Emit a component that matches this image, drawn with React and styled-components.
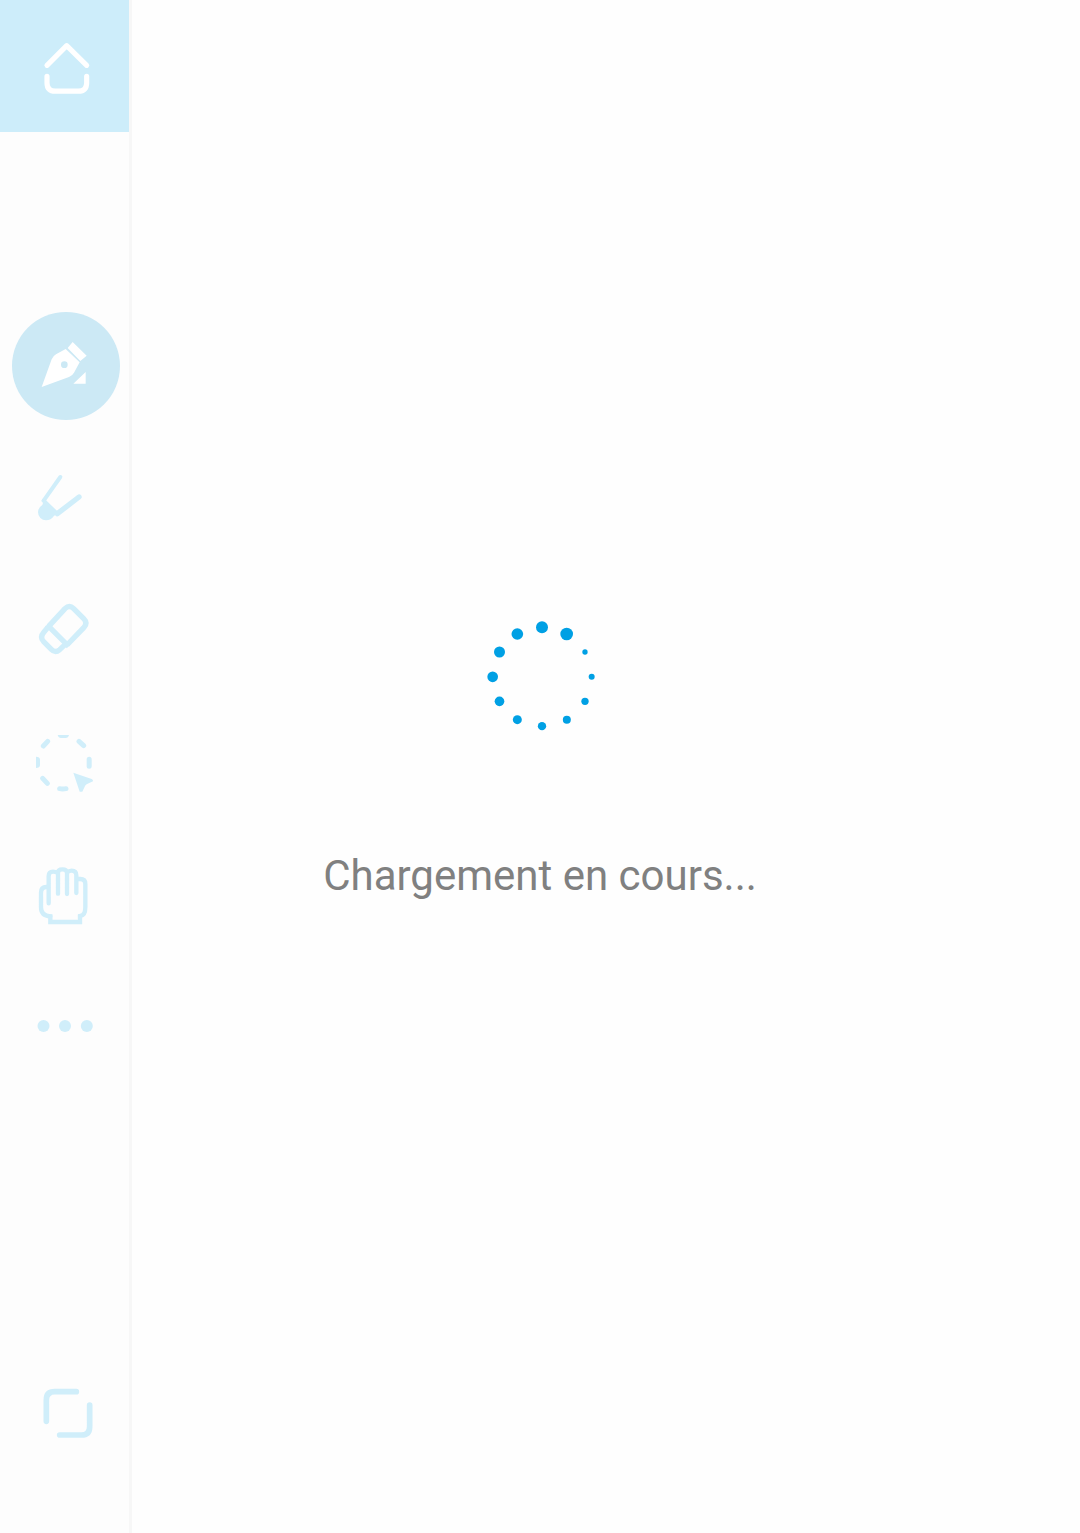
import React from "react";
import styled, { createGlobalStyle } from "styled-components";

const GlobalStyle = createGlobalStyle`
  * { box-sizing: border-box; }
  body { margin: 0; background: #fefefe; }
`;

const Page = styled.div`
  display: grid;
  grid-template-columns: 132px 1fr;
  width: 100%;
  height: 1533px;
  overflow: hidden;
  font-family: Roboto, "Liberation Sans", sans-serif;
`;

const Sidebar = styled.aside`
  display: flex;
  flex-direction: column;
  background: #fdfdfd;
  border-right: 3px solid #f7f7f7;
`;

const ToolButton = styled.button`
  display: flex;
  align-items: center;
  justify-content: flex-start;
  flex: none;
  height: 132px;
  padding: 0 0 0 ${(p) => p.$inset ?? 20}px;
  border: 0;
  background: ${(p) => p.$background || "transparent"};
  color: ${(p) => p.$color || "#d0eefa"};
`;

const Tools = styled.nav`
  display: flex;
  flex-direction: column;
  margin-top: 168px;
`;

const Selected = styled.span`
  display: flex;
  width: 108px;
  height: 108px;
  flex: none;
  border-radius: 50%;
  background: #cce9f5;
`;

const Footer = styled.div`
  margin-top: auto;
  padding-bottom: 52px;
`;

const Drawing = styled.svg`
  display: block;
  flex: none;
  width: ${(p) => p.$width}px;
  height: ${(p) => p.$height}px;
`;

const Main = styled.main`
  display: flex;
  flex-direction: column;
  align-items: center;
  width: 100%;
  padding: 610px 132px 0 0;
`;

const Message = styled.p`
  margin: 106px 0 0;
  color: #808080;
  font-size: 42px;
  line-height: 49px;
  white-space: nowrap;
`;

/* Tool icons are drawn on a grid of three units per pixel. */
function ToolIcon({ top, strokeWidth = 14, children }) {
  return (
    <Drawing
      $width={90}
      $height={132}
      viewBox={`0 ${-top} 270 396`}
      fill="none"
      stroke="currentColor"
      strokeWidth={strokeWidth}
      strokeLinecap="round"
      strokeLinejoin="round"
    >
      {children}
    </Drawing>
  );
}

function HomeIcon() {
  return (
    <Drawing $width={129} $height={132} viewBox="0 0 387 396" fill="none" stroke="currentColor" strokeWidth="15.5" strokeLinecap="round" strokeLinejoin="round">
      <path d="M141 196L200 137L260 196" />
      <path d="M141 229V248Q141 273.500 166 273.500H235Q260 273.500 260 248V229" />
    </Drawing>
  );
}

function PenIcon() {
  return (
    <Drawing $width={108} $height={108} viewBox="36 36 324 324" fill="currentColor">
      <path fillRule="evenodd" d="M125 261L155 178Q159 168 168 163L197 147L239 187L222 218Q217 227 207 231ZM193 184A10 10 0 1 0 193 204A10 10 0 1 0 193 184Z" />
      <path d="M218 126L260 167L241 183L203 144ZM257 216V251H220Z" />
    </Drawing>
  );
}

function BrushIcon() {
  return (
    <ToolIcon top={84} strokeWidth={12}>
      <path d="M121 51L71 122" />
      <path d="M71 122L112 162" />
      <path d="M112 161L177 111" strokeWidth="16" />
      <path d="M72 120L112 160L101 169Q93 181 78 181A24 24 0 0 1 54 157Q54 143 67 135Z" fill="currentColor" stroke="none" />
    </ToolIcon>
  );
}

function EraserIcon() {
  return (
    <ToolIcon top={78} strokeWidth={16}>
      <path strokeLinecap="butt" d="M81 104L146 169" />
      <path strokeLinecap="butt" d="M86 109L135 56Q148 43 161 56L191 86Q204 99 192 112L141 165" />
      <path strokeLinecap="butt" d="M84 112L72 126Q58 142 71 155L94 178Q106 190 119 179L136 163" />
    </ToolIcon>
  );
}

function LassoIcon() {
  return (
    <ToolIcon top={72} strokeWidth={15}>
      <path stroke="none" fill="currentColor" d="M113 45H147Q145 54 137 54H123Q115 54 113 45ZM48 110Q60 110 60 119V135Q60 144 48 144Z" />
      <path d="M70 78L83 64M177 64L191 77M207.500 118V139M119 206Q128 208 138 206M68 175L82 190" />
      <path stroke="none" fill="currentColor" d="M160 158L215 177Q220 179 219 184L200 193Q196 195 194 200L187 215H179Z" />
    </ToolIcon>
  );
}

function HandIcon() {
  return (
    <ToolIcon top={81} strokeWidth={13}>
      <path d="M86 145V63Q86 50 99 50Q106 50 114 54M114 116V53Q114 43 127 43Q140 43 141 53V117M141 53Q147 47 155 47Q169 47 169 61V114M172 72H181Q196 72 196 87V157Q196 183 180 183M91 184Q63 183 63 157V113Q63 96 79 96" />
      <path strokeLinecap="butt" strokeLinejoin="miter" d="M91 178V201H180V178" />
    </ToolIcon>
  );
}

function MoreIcon() {
  return (
    <ToolIcon top={135}>
      {[70.5, 135, 200.5].map((x) => (
        <circle key={x} cx={x} cy="63" r="18" fill="currentColor" stroke="none" />
      ))}
    </ToolIcon>
  );
}

function FullscreenIcon() {
  return (
    <Drawing $width={90} $height={80} viewBox="0 0 270 240" fill="none" stroke="currentColor" strokeWidth="17" strokeLinecap="round">
      <path d="M64 139V75Q64 50 89 50H154M194 90V155Q194 180 169 180H104" />
    </Drawing>
  );
}

const dots = [
  [201, 52, 18], [275, 72, 19], [330, 126, 8], [350, 200.5, 9],
  [330, 274, 11], [275.5, 329, 12], [201, 348.5, 12.5], [127, 329, 13.5],
  [73.5, 274, 14.5], [53, 200.5, 16], [73.5, 126, 16.5], [127, 72, 17.5],
];

function Spinner() {
  return (
    <Drawing $width={135} $height={135} viewBox="-6 0 405 405" fill="#00a0e4" role="status">
      {dots.map(([x, y, r]) => (
        <circle key={`${x}-${y}`} cx={x} cy={y} r={r} />
      ))}
    </Drawing>
  );
}

export default function App() {
  return (
    <Page>
      <GlobalStyle />
      <Sidebar>
        <ToolButton $inset={0} $background="#cdedfa" $color="#ffffff"><HomeIcon /></ToolButton>
        <Tools>
          <ToolButton $inset={12} $color="#ffffff"><Selected><PenIcon /></Selected></ToolButton>
          <ToolButton><BrushIcon /></ToolButton>
          <ToolButton><EraserIcon /></ToolButton>
          <ToolButton><LassoIcon /></ToolButton>
          <ToolButton><HandIcon /></ToolButton>
          <ToolButton><MoreIcon /></ToolButton>
        </Tools>
        <Footer>
          <ToolButton $inset={25}><FullscreenIcon /></ToolButton>
        </Footer>
      </Sidebar>
      <Main>
        <Spinner />
        <Message>Chargement en cours...</Message>
      </Main>
    </Page>
  );
}
